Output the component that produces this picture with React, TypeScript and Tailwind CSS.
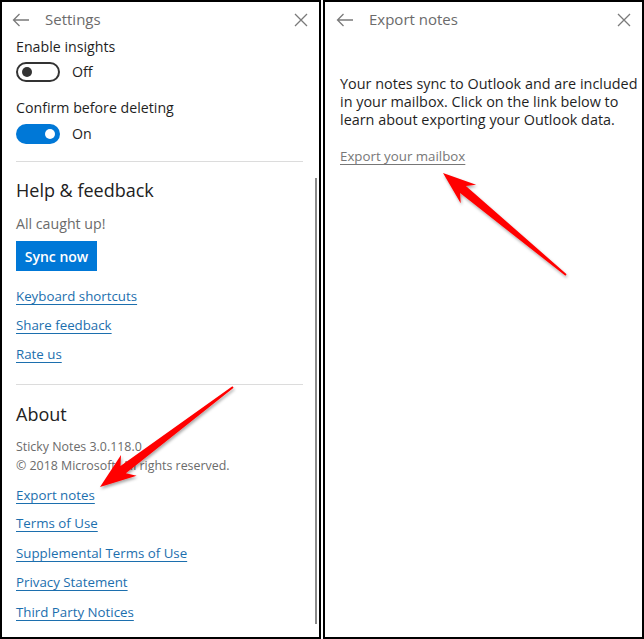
import React from 'react';

type Pt = [number, number];

// Builds a tapered "callout" arrow polygon from tail to tip
const arrowPoints = (tail: Pt, tip: Pt, headLen: number, headHalf: number, neckLen: number, neckHalf: number) => {
    const dx = tip[0] - tail[0];
    const dy = tip[1] - tail[1];
    const len = Math.hypot(dx, dy);
    const ux = dx / len;
    const uy = dy / len;
    const nx = -uy;
    const ny = ux;
    const at = (s: number, t: number): Pt => [tip[0] - ux * s + nx * t, tip[1] - uy * s + ny * t];
    const pts: Pt[] = [
        tip,
        at(headLen, headHalf),
        at(neckLen, neckHalf),
        at(len, 1),
        at(len, -1),
        at(neckLen, -neckHalf),
        at(headLen, -headHalf),
    ];
    return pts.map((p) => `${p[0].toFixed(1)},${p[1].toFixed(1)}`).join(' ');
};

const BackIcon: React.FC = () => (
    <svg width="18" height="14" viewBox="0 0 18 14" fill="none" stroke="#7a7a7a" strokeWidth="1.3">
        <path d="M17 7H1.5M7.5 1L1.5 7l6 6" />
    </svg>
);

const CloseIcon: React.FC = () => (
    <svg width="14" height="14" viewBox="0 0 14 14" fill="none" stroke="#7a7a7a" strokeWidth="1.3">
        <path d="M1 1l12 12M13 1L1 13" />
    </svg>
);

const Link: React.FC<{ children: React.ReactNode; className?: string }> = ({ children, className = '' }) => (
    <div className={`h-[20px] leading-[20px] text-[13.3px] ${className}`}>
        <span className="text-[#1c6fae] underline underline-offset-[3px] decoration-[1px]">{children}</span>
    </div>
);

const App: React.FC = () => {
    return (
        <div
            className="relative w-[644px] h-[639px] bg-white flex gap-[2px] overflow-hidden text-[#1f1f1f]"
            style={{ fontFamily: '"Open Sans", "Noto Sans", sans-serif' }}
        >
            {/* Settings panel */}
            <div className="relative w-[321px] h-[639px] border-2 border-black bg-white">
                <div className="h-[35px] flex items-center">
                    <div className="ml-[10px] w-[18px] flex items-center"><BackIcon /></div>
                    <div className="ml-[15px] text-[15px] text-[#6b6b6b]">Settings</div>
                    <div className="ml-auto mr-[11px] flex items-center"><CloseIcon /></div>
                </div>

                <div className="pl-[14px] pr-[14px]">
                    <div className="h-[20px] leading-[20px] text-[14.2px]">Enable insights</div>
                    <div className="mt-[5px] h-[20px] flex items-center">
                        <div className="w-[44px] h-[20px] rounded-full border-2 border-[#333] flex items-center pl-[4px]">
                            <div className="w-[10px] h-[10px] rounded-full bg-[#333]" />
                        </div>
                        <span className="ml-[12px] text-[14.2px]">Off</span>
                    </div>

                    <div className="mt-[16px] h-[20px] leading-[20px] text-[14.2px]">Confirm before deleting</div>
                    <div className="mt-[6px] h-[20px] flex items-center">
                        <div className="w-[44px] h-[20px] rounded-full bg-[#0078d7] flex items-center justify-end pr-[5px]">
                            <div className="w-[10px] h-[10px] rounded-full bg-white" />
                        </div>
                        <span className="ml-[12px] text-[14.2px]">On</span>
                    </div>

                    <div className="mt-[17px] h-px bg-[#dcdcdc] mr-[2px]" />

                    <div className="mt-[14px] h-[28px] leading-[28px] text-[18px] text-[#222]">Help &amp; feedback</div>
                    <div className="mt-[10px] h-[20px] leading-[20px] text-[14.2px] text-[#6b6b6b]">All caught up!</div>
                    <button className="mt-[7px] h-[30px] w-[81px] bg-[#0078d7] text-white text-[14px] font-semibold block">
                        Sync now
                    </button>

                    <Link className="mt-[15px]">Keyboard shortcuts</Link>
                    <Link className="mt-[9px]">Share feedback</Link>
                    <Link className="mt-[9px]">Rate us</Link>

                    <div className="mt-[20px] h-px bg-[#dcdcdc] mr-[2px]" />

                    <div className="mt-[15px] h-[28px] leading-[28px] text-[18px] text-[#222]">About</div>
                    <div className="mt-[10px] h-[18px] leading-[18px] text-[12.4px] text-[#6b6b6b]">Sticky Notes 3.0.118.0</div>
                    <div className="mt-[1px] h-[18px] leading-[18px] text-[12.4px] text-[#6b6b6b]">© 2018 Microsoft. All rights reserved.</div>

                    <Link className="mt-[10px]">Export notes</Link>
                    <Link className="mt-[8px]">Terms of Use</Link>
                    <Link className="mt-[10px]">Supplemental Terms of Use</Link>
                    <Link className="mt-[9px]">Privacy Statement</Link>
                    <Link className="mt-[10px]">Third Party Notices</Link>
                </div>

                {/* scrollbar thumb */}
                <div className="absolute right-[2px] top-[176px] w-[2px] h-[446px] bg-[#8a8a8a]" />
            </div>

            {/* Export notes panel */}
            <div className="flex-1 h-[639px] border-2 border-black bg-white">
                <div className="h-[35px] flex items-center">
                    <div className="ml-[11px] w-[18px] flex items-center"><BackIcon /></div>
                    <div className="ml-[15px] text-[15px] text-[#6b6b6b]">Export notes</div>
                    <div className="ml-auto mr-[11px] flex items-center"><CloseIcon /></div>
                </div>
                <div className="pl-[15px] pt-[38px] text-[14.4px] leading-[18px]">
                    <div>Your notes sync to Outlook and are included</div>
                    <div>in your mailbox. Click on the link below to</div>
                    <div>learn about exporting your Outlook data.</div>
                </div>
                <div className="pl-[15px] mt-[17px] h-[20px] leading-[20px] text-[13.3px]">
                    <span className="text-[#777] underline underline-offset-[3px] decoration-[1px]">Export your mailbox</span>
                </div>
            </div>

            {/* callout arrows */}
            <svg className="absolute inset-0 pointer-events-none" width="644" height="639" viewBox="0 0 644 639">
                <defs>
                    <filter id="shadow" x="-20%" y="-20%" width="140%" height="140%">
                        <feDropShadow dx="1" dy="2" stdDeviation="1.5" floodColor="#000" floodOpacity="0.35" />
                    </filter>
                </defs>
                <polygon points={arrowPoints([233, 387], [100, 487], 36, 13, 29, 4.5)} fill="#ff0000" filter="url(#shadow)" />
                <polygon points={arrowPoints([566, 275], [443, 173], 33, 12, 26, 4.5)} fill="#ff0000" filter="url(#shadow)" />
            </svg>
        </div>
    );
};

export default App;
